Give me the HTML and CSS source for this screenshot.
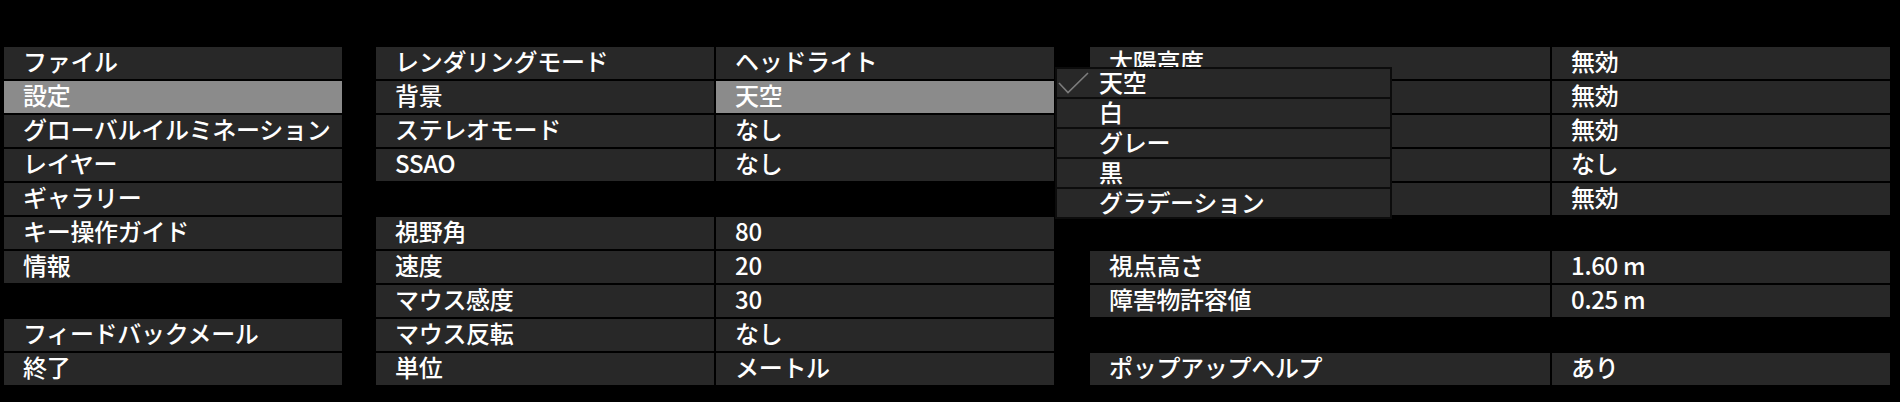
FILE: index.html
```html
<!DOCTYPE html>
<html lang="ja">
<head>
<meta charset="utf-8">
<title>設定</title>
<link rel="stylesheet" href="styles.css">
</head>
<body>
<div class="screen">
  <div class="menu">
    <div class="cell">ファイル</div>
    <div class="cell active">設定</div>
    <div class="cell">グローバルイルミネーション</div>
    <div class="cell">レイヤー</div>
    <div class="cell">ギャラリー</div>
    <div class="cell">キー操作ガイド</div>
    <div class="cell">情報</div>
    <div class="spacer"></div>
    <div class="cell">フィードバックメール</div>
    <div class="cell">終了</div>
  </div>

  <div class="table mid">
    <div class="row"><div class="cell">レンダリングモード</div><div class="cell">ヘッドライト</div></div>
    <div class="row"><div class="cell">背景</div><div class="cell active">天空</div></div>
    <div class="row"><div class="cell">ステレオモード</div><div class="cell">なし</div></div>
    <div class="row"><div class="cell">SSAO</div><div class="cell">なし</div></div>
    <div class="spacer"></div>
    <div class="row"><div class="cell">視野角</div><div class="cell">80</div></div>
    <div class="row"><div class="cell">速度</div><div class="cell">20</div></div>
    <div class="row"><div class="cell">マウス感度</div><div class="cell">30</div></div>
    <div class="row"><div class="cell">マウス反転</div><div class="cell">なし</div></div>
    <div class="row"><div class="cell">単位</div><div class="cell">メートル</div></div>
  </div>

  <div class="table right">
    <div class="row"><div class="cell">太陽高度</div><div class="cell">無効</div></div>
    <div class="row"><div class="cell"></div><div class="cell">無効</div></div>
    <div class="row"><div class="cell"></div><div class="cell">無効</div></div>
    <div class="row"><div class="cell"></div><div class="cell">なし</div></div>
    <div class="row"><div class="cell"></div><div class="cell">無効</div></div>
    <div class="spacer"></div>
    <div class="row"><div class="cell">視点高さ</div><div class="cell">1.60 m</div></div>
    <div class="row"><div class="cell">障害物許容値</div><div class="cell">0.25 m</div></div>
    <div class="spacer"></div>
    <div class="row"><div class="cell">ポップアップヘルプ</div><div class="cell">あり</div></div>
  </div>

  <div class="dropdown">
    <div class="option checked">
      <svg class="check" width="32" height="22" viewBox="0 0 32 22"><polyline points="1,11 10,20.5 30,1" fill="none" stroke="#7c7c7c" stroke-width="1.6"/></svg>
      天空
    </div>
    <div class="option">白</div>
    <div class="option">グレー</div>
    <div class="option">黒</div>
    <div class="option">グラデーション</div>
  </div>
</div>
</body>
</html>
```

FILE: styles.css
```css
html, body {
  margin: 0;
  background: #000;
}

body {
  font-family: "Noto Sans CJK JP", "Noto Sans", sans-serif;
  font-size: 24px;
  font-weight: 500;
  letter-spacing: -0.3px;
  color: #fff;
  width: 1900px;
  height: 402px;
  overflow: hidden;
}

.screen {
  position: relative;
  display: flex;
  align-items: flex-start;
  padding: 47px 10px 0 4px;
}

.menu,
.table {
  display: flex;
  flex-direction: column;
  gap: 2px;
}

.menu {
  width: 338px;
}

.table.mid {
  margin-left: 34px;
}

.table.right {
  margin-left: 36px;
}

.row {
  display: grid;
  gap: 2px;
}

.mid .row {
  grid-template-columns: 338px 338px;
}

.right .row {
  grid-template-columns: 460px 338px;
}

.cell {
  box-sizing: border-box;
  height: 32px;
  line-height: 27px;
  padding-left: 19px;
  background: #282828;
  white-space: nowrap;
}

.cell.active {
  background: #8b8b8b;
}

.spacer {
  height: 32px;
}

.dropdown {
  position: absolute;
  left: 1055px;
  top: 67px;
  width: 333px;
  padding: 2px;
  background: #0c0c0c;
  display: flex;
  flex-direction: column;
  gap: 2px;
}

.option {
  position: relative;
  height: 28px;
  line-height: 25px;
  padding-left: 42px;
  background: #282828;
  white-space: nowrap;
}

.check {
  position: absolute;
  left: 1px;
  top: 3px;
}
```
